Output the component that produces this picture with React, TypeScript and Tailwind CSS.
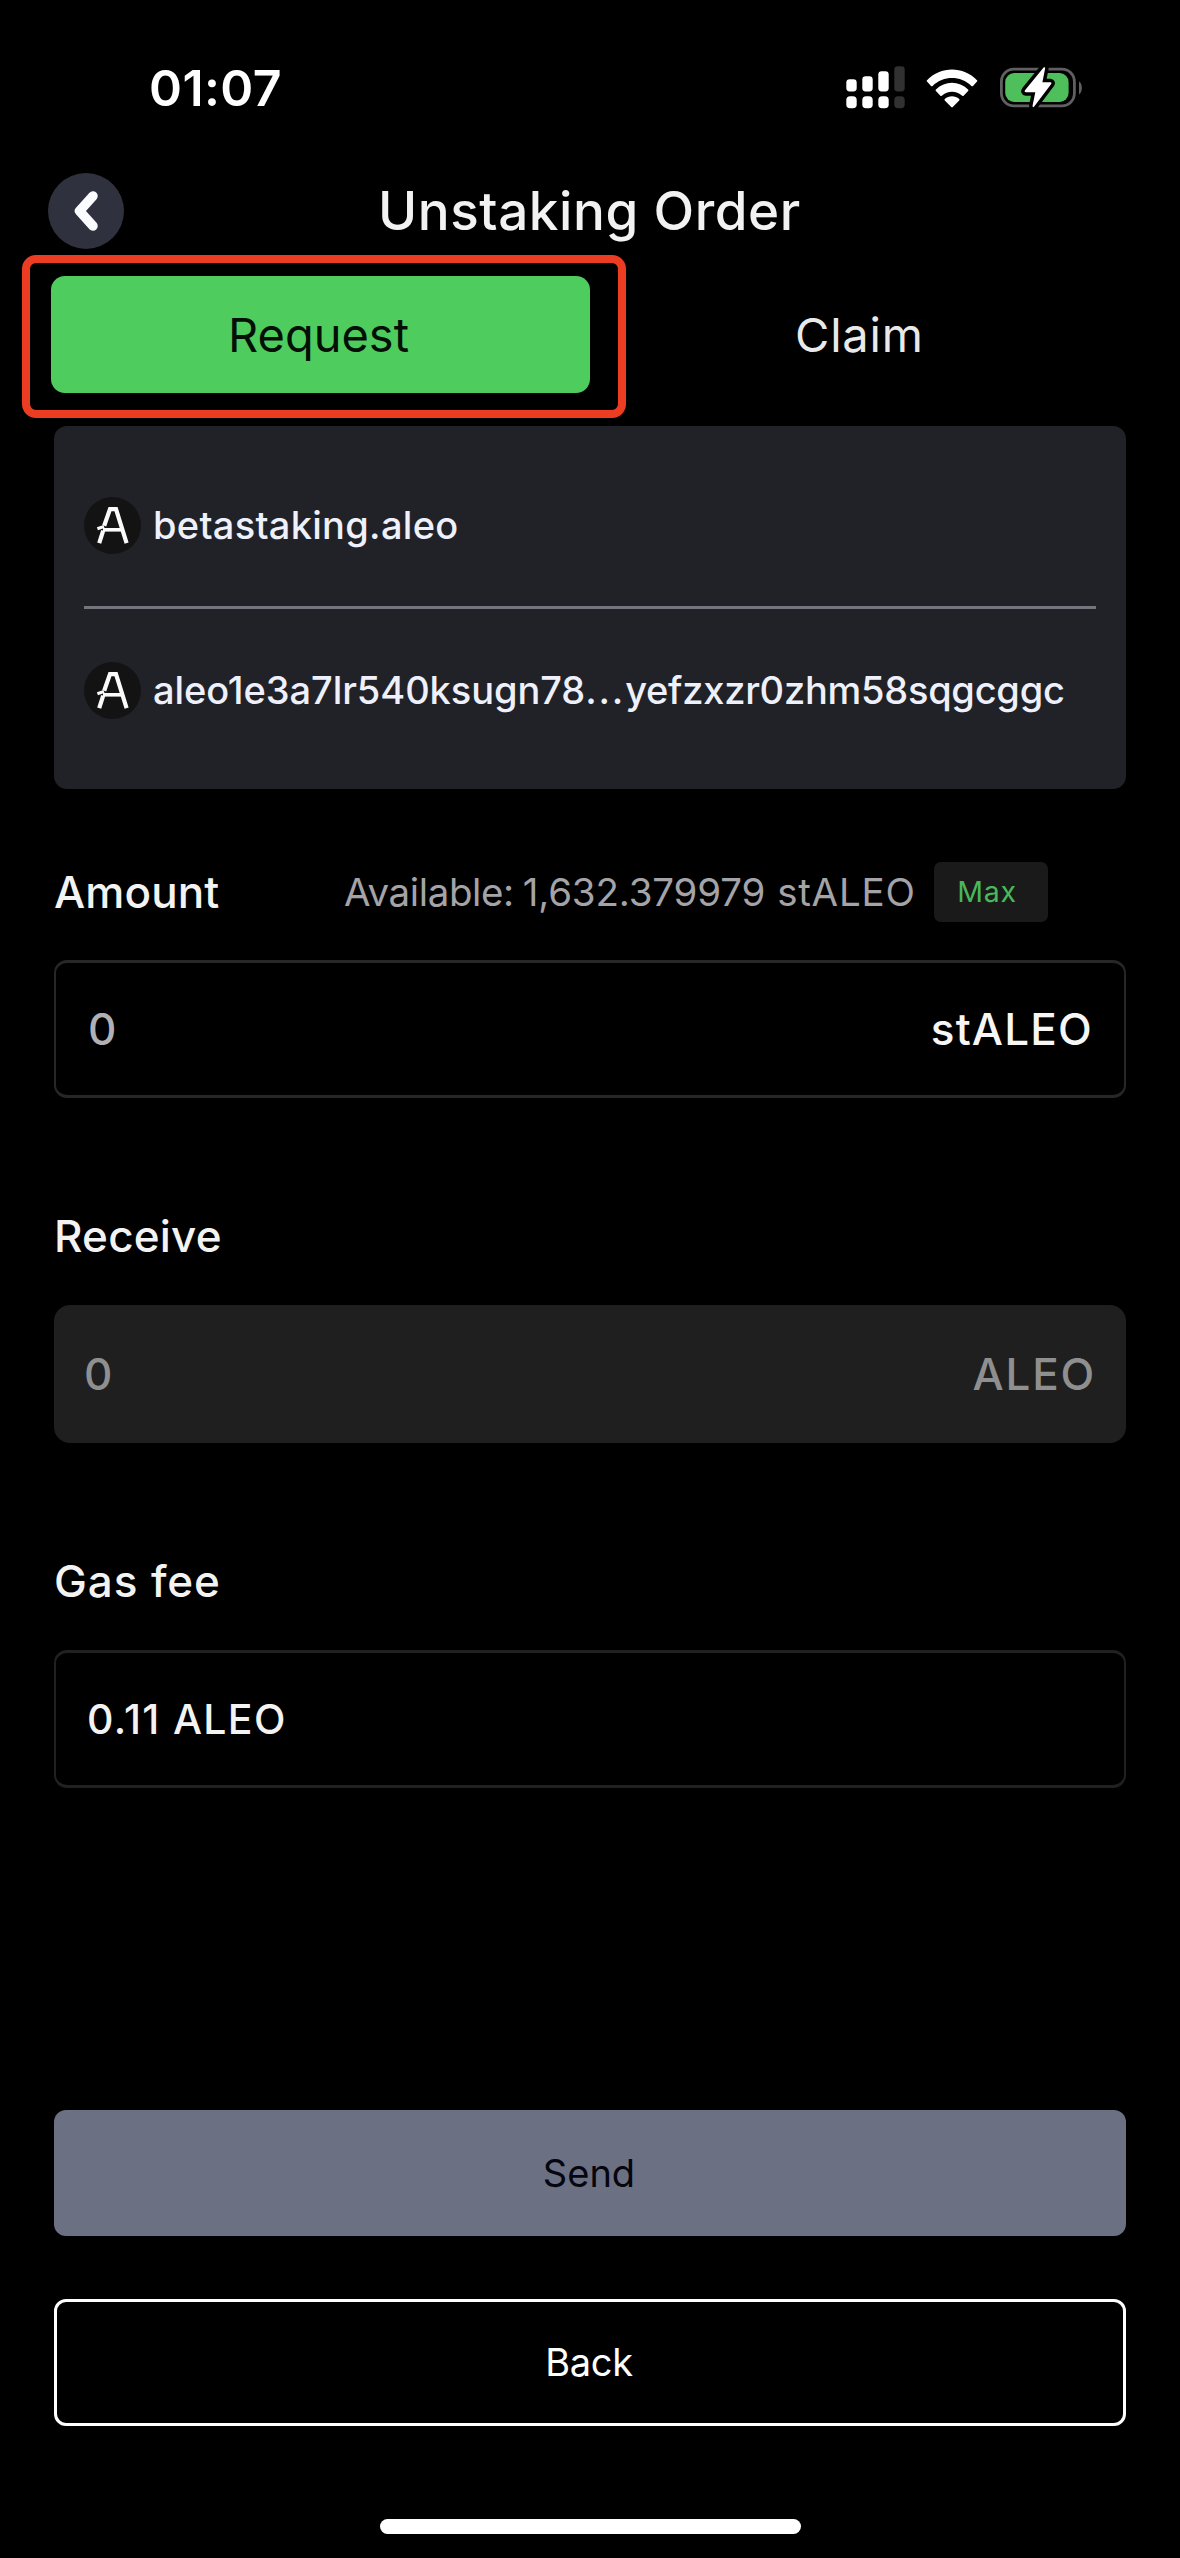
import type { ReactNode } from "react";

function SignalIcon() {
  return (
    <svg width="60" height="43" viewBox="0 0 60 43" fill="#ffffff">
      <rect x="0.3" y="13.3" width="10.4" height="12.2" rx="3.4" />
      <rect x="16.3" y="10.2" width="10.4" height="15.3" rx="3.4" />
      <rect x="32.3" y="5.2" width="10.4" height="20.3" rx="3.4" />
      <rect x="48.3" y="0.2" width="10.4" height="25.3" rx="3.4" fill="#313131" />
      <rect x="0.3" y="30.2" width="10.4" height="12" rx="3.8" />
      <rect x="16.3" y="30.2" width="10.4" height="12" rx="3.8" />
      <rect x="32.3" y="30.2" width="10.4" height="12" rx="3.8" />
      <rect x="48.3" y="30.2" width="10.4" height="12" rx="3.8" fill="#313131" />
    </svg>
  );
}

function WifiIcon() {
  return (
    <svg width="52" height="40" viewBox="0 0 52 40" fill="#ffffff">
      <path d="M1 11.2 C14.5 -3 37.5 -3 51 11.2 Q51.6 11.9 51 12.6 L47 17 Q46.2 17.7 45.4 17 C34.5 6.4 17.5 6.4 6.6 17 Q5.8 17.7 5 17 L1 12.6 Q0.4 11.9 1 11.2 Z" />
      <path d="M9.9 20.6 C19 11.6 33 11.6 42.1 20.6 Q42.8 21.3 42.1 22 L37.6 26.7 Q36.9 27.3 36.2 26.7 C30.2 21.5 21.8 21.5 15.8 26.7 Q15.1 27.3 14.4 26.7 L9.9 22 Q9.2 21.3 9.9 20.6 Z" />
      <path d="M18.8 29.9 C22.8 26.2 29.2 26.2 33.2 29.9 Q34 30.6 33.2 31.4 L26.8 38 Q26 38.8 25.2 38 L18.8 31.4 Q18 30.6 18.8 29.9 Z" />
    </svg>
  );
}

const BOLT = "M43.6 1.5 Q45.4 0.4 45.1 2.6 L42.4 16.2 H50.3 Q52.2 16.4 51 18.2 L34.2 40.4 Q32.4 42.2 32.6 39.6 L35.3 26.2 H26 Q23.8 25.9 25.2 24 Z";

function BatteryIcon() {
  return (
    <svg width="84" height="44" viewBox="0 0 84 44">
      <rect x="1.4" y="3.2" width="73" height="36.6" rx="12.5" fill="none" stroke="#605f61" strokeWidth="2.8" />
      <rect x="5.2" y="7" width="63.4" height="29" rx="9" fill="#4fbf5b" />
      <path d="M79 15.6 C82.8 17.6 82.8 26.4 79 28.4 Z" fill="#605f61" />
      <path d={BOLT} fill="#000000" stroke="#000000" strokeWidth="7" strokeLinejoin="round" />
      <path d={BOLT} fill="#ffffff" />
    </svg>
  );
}

function AleoIcon() {
  return (
    <svg className="shrink-0" width="57" height="57" viewBox="0 0 57 57">
      <circle cx="28.5" cy="28.5" r="28.5" fill="#131314" />
      <g fill="none" stroke="#fafafa" strokeWidth="4.2">
        <path d="M15.2 46.2 L19.2 33.6" />
        <path d="M20.2 28.8 L26 12.1 H32 L42.6 46.2" />
        <path d="M19 32.8 H38.4" strokeWidth="3.6" />
        <path d="M13.4 31.8 L20 29.6" strokeWidth="3.2" />
      </g>
    </svg>
  );
}

function Account({ children }: { children: ReactNode }) {
  return (
    <div className="flex h-[57px] items-center text-[38px] font-medium leading-[57px] text-[#eef0fb]">
      <AleoIcon />
      <span className="ml-3 whitespace-nowrap">{children}</span>
    </div>
  );
}

export default function App() {
  return (
    <div className="flex h-[2558px] w-[1180px] flex-col bg-black font-['Inter','Liberation_Sans',sans-serif] whitespace-nowrap text-[#f3f3f3]">
      <div className="flex h-[173px] items-start pl-[149px]">
        <span className="mt-[58px] w-[697px] text-[50px] font-semibold leading-[60px] tracking-[0.4px] text-white">01:07</span>
        <div className="mt-[66px] flex items-start">
          <SignalIcon />
          <div className="mt-[2.5px] ml-5">
            <WifiIcon />
          </div>
          <div className="ml-[21.5px]">
            <BatteryIcon />
          </div>
        </div>
      </div>

      <header className="flex h-[82px] items-start">
        <button className="ml-12 flex h-[76px] w-[76px] items-center justify-center rounded-full bg-[#30313e]">
          <svg width="36" height="48" viewBox="0 0 36 48" fill="none" stroke="#fbfcff" strokeWidth="9.5" strokeLinecap="round" strokeLinejoin="round">
            <path d="M25 9 L11.5 24 L25 39" />
          </svg>
        </button>
        <h1 className="ml-[254px] text-[53px] font-medium leading-[76px] tracking-[0.56px] text-[#f2f2f2]">Unstaking Order</h1>
      </header>

      <div className="flex h-[171px] items-start text-[47px] leading-[117px]">
        <div className="ml-[22px] h-[163px] w-[604px] rounded-[14px] border-[8px] border-[#ec3c21] pt-[13px] pl-[21px]">
          <button className="block h-[117px] w-[539px] rounded-[14px] bg-[#4ecd5e] pr-1 text-center text-[#041006]">Request</button>
        </div>
        <button className="mt-[21px] ml-[169px] tracking-[0.8px] text-[#e9e9ea]">Claim</button>
      </div>

      <section className="mx-[54px] h-[363px] rounded-[13px] bg-[#212227] px-[30px] pt-[71px]">
        <Account>
          <span className="tracking-[0.29px]">betastaking.aleo</span>
        </Account>
        <div className="mt-[52px] mb-[53px] h-[3px] bg-[#74757f]" />
        <Account>
          <span className="tracking-[-0.07px]">aleo1e3a7lr540ksugn78</span>
          <span className="tracking-[1.8px]">...</span>
          <span className="tracking-[-0.25px]">yefzxzr0zhm58sqgcggc</span>
        </Account>
      </section>

      <section className="mx-[54px] mt-[73px]">
        <div className="flex h-[60px] items-center">
          <h2 className="w-[290px] text-[44px] font-medium leading-[58px] tracking-[0.1px]">Amount</h2>
          <div className="flex w-[590px] text-[38.5px] leading-[58px] text-[#a3a3a8]">
            <span className="tracking-[-0.4px]">Available:</span>
            <span className="ml-[9px] tracking-[-0.17px]">1,632.379979</span>
            <span className="ml-3 tracking-[0.78px]">stALEO</span>
          </div>
          <button className="h-[60px] w-[114px] rounded-[7px] bg-[#1a1a1b] pr-2 text-[28.5px] leading-[58px] tracking-[0.8px] text-[#48b85a]">Max</button>
        </div>
        <div className="mt-[38px] flex h-[138px] items-center justify-between rounded-[13px] border-x-2 border-y-3 border-[#272728] pr-[31px] pl-[32px] text-[44px] font-medium">
          <span className="text-[#b1b1b5]">0</span>
          <span className="tracking-[1.2px] text-[#f6f6f6]">stALEO</span>
        </div>
      </section>

      <section className="mx-[54px] mt-[108px]">
        <h2 className="text-[44px] font-medium leading-[60px] tracking-[0.2px]">Receive</h2>
        <div className="mt-[39px] flex h-[138px] items-center justify-between rounded-[16px] bg-[#1f1f1f] pr-[30px] pl-[30px] text-[44px] font-medium text-[#8f8f8f]">
          <span>0</span>
          <span className="tracking-[1.8px]">ALEO</span>
        </div>
      </section>

      <section className="mx-[54px] mt-[108px]">
        <h2 className="text-[44px] font-medium leading-[60px] tracking-[0.9px]">Gas fee</h2>
        <div className="mt-[39px] flex h-[138px] items-center rounded-[13px] border-x-2 border-y-3 border-[#212121] pt-[2px] pl-[31px] text-[41px] font-medium tracking-[1.35px]">
          0.11 ALEO
        </div>
      </section>

      <div className="mx-[54px] mt-[322px] flex flex-col gap-[63px] text-[38px]">
        <button className="h-[126px] rounded-[12px] bg-[#6b7082] pr-[2px] leading-[126px] text-[#05060f]">Send</button>
        <button className="h-[127px] rounded-[12px] border-[3px] border-white pr-[2px] leading-[121px] tracking-[-0.3px] text-white">Back</button>
      </div>

      <div className="mt-[92.5px] ml-[380px] h-[15.5px] w-[420.5px] rounded-full bg-white" />
    </div>
  );
}
